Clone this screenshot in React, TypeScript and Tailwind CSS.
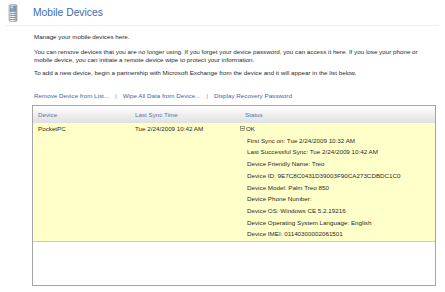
import React from "react";

const PhoneIcon = () => (
  <svg width="10" height="18" viewBox="0 0 10 18">
    <defs>
      <linearGradient id="pb" x1="0" x2="1" y1="0" y2="0">
        <stop offset="0" stopColor="#c8ccd2" />
        <stop offset="0.5" stopColor="#f4f5f7" />
        <stop offset="1" stopColor="#9da3ab" />
      </linearGradient>
    </defs>
    <rect x="1" y="0.5" width="8" height="17" rx="1.5" fill="url(#pb)" stroke="#8a9098" strokeWidth="0.6" />
    <rect x="2.3" y="2" width="5.4" height="5.5" fill="#7f9fc4" stroke="#5d6f86" strokeWidth="0.4" />
    <rect x="2.6" y="2.3" width="2.4" height="2" fill="#bcd3ee" />
    <g fill="#707882">
      <rect x="2.5" y="9" width="1.3" height="1" />
      <rect x="4.4" y="9" width="1.3" height="1" />
      <rect x="6.3" y="9" width="1.3" height="1" />
      <rect x="2.5" y="11" width="1.3" height="1" />
      <rect x="4.4" y="11" width="1.3" height="1" />
      <rect x="6.3" y="11" width="1.3" height="1" />
      <rect x="2.5" y="13" width="1.3" height="1" />
      <rect x="4.4" y="13" width="1.3" height="1" />
      <rect x="6.3" y="13" width="1.3" height="1" />
      <rect x="2.5" y="15" width="1.3" height="1" />
      <rect x="4.4" y="15" width="1.3" height="1" />
      <rect x="6.3" y="15" width="1.3" height="1" />
    </g>
  </svg>
);

const MinusBox = () => (
  <svg width="5" height="5" viewBox="0 0 5 5" className="mr-[1px]">
    <rect x="0.5" y="0.5" width="4" height="4" fill="none" stroke="#666" strokeWidth="0.6" />
    <line x1="1.3" y1="2.5" x2="3.7" y2="2.5" stroke="#333" strokeWidth="0.7" />
  </svg>
);

const details = [
  "First Sync on: Tue 2/24/2009 10:32 AM",
  "Last Successful Sync: Tue 2/24/2009 10:42 AM",
  "Device Friendly Name: Treo",
  "Device ID: 9E7C8C0431D39003F90CA273CDBDC1C0",
  "Device Model: Palm Treo 850",
  "Device Phone Number:",
  "Device OS: Windows CE 5.2.19216",
  "Device Operating System Language: English",
  "Device IMEI: 01140300002061501",
];

export default function App() {
  return (
    <div
      className="w-[445px] h-[292px] bg-white overflow-hidden text-[#2a2a2a]"
      style={{ fontFamily: '"Liberation Sans", Arial, sans-serif' }}
    >
      <div className="flex items-center h-[25px] pl-[8px]">
        <PhoneIcon />
        <span className="ml-[15px] text-[10.3px] leading-[12px] text-[#3c6ab2]">Mobile Devices</span>
      </div>
      <div className="mx-[6px] border-t border-[#ededed]" />
      <div className="pl-[32px] pr-[8px] text-[6.25px] leading-[8px]">
        <p className="pl-[2px] mt-[7px]">Manage your mobile devices here.</p>
        <p className="pl-[2px] mt-[7px] pr-[10px]">
          You can remove devices that you are no longer using. If you forget your device password, you can access it here. If you lose your phone or
          <br />
          mobile device, you can initiate a remote device wipe to protect your information.
        </p>
        <p className="pl-[2px] mt-[5px]">
          To add a new device, begin a partnership with Microsoft Exchange from the device and it will appear in the list below.
        </p>
        <div className="pl-[2px] mt-[15px] flex items-center text-[#4466aa]">
          <span>Remove Device from List...</span>
          <span className="mx-[6px] text-[#888]">|</span>
          <span>Wipe All Data from Device...</span>
          <span className="mx-[6px] text-[#888]">|</span>
          <span>Display Recovery Password</span>
        </div>
        <div className="mt-[5px] w-[404px] h-[181px] border border-[#a5a5a5] flex flex-col">
          <div className="grid grid-cols-[97px_110px_1fr] h-[17px] items-center bg-gradient-to-b from-[#ffffff] to-[#e0e0e0] text-[#5573ad]">
            <span className="pl-[5px]">Device</span>
            <span className="pl-[5px]">Last Sync Time</span>
            <span className="pl-[5px]">Status</span>
          </div>
          <div className="grid grid-cols-[97px_110px_1fr] bg-[#ffffc9] border-b border-[#e6cf55] pb-[1px] leading-[11.7px]">
            <span className="pl-[5px]">PocketPC</span>
            <span className="pl-[5px]">Tue 2/24/2009 10:42 AM</span>
            <div className="flex flex-col">
              <div className="flex items-center">
                <MinusBox />
                <span>OK</span>
              </div>
              {details.map((d) => (
                <span key={d} className="pl-[7px]">
                  {d}
                </span>
              ))}
            </div>
          </div>
        </div>
      </div>
    </div>
  );
}
